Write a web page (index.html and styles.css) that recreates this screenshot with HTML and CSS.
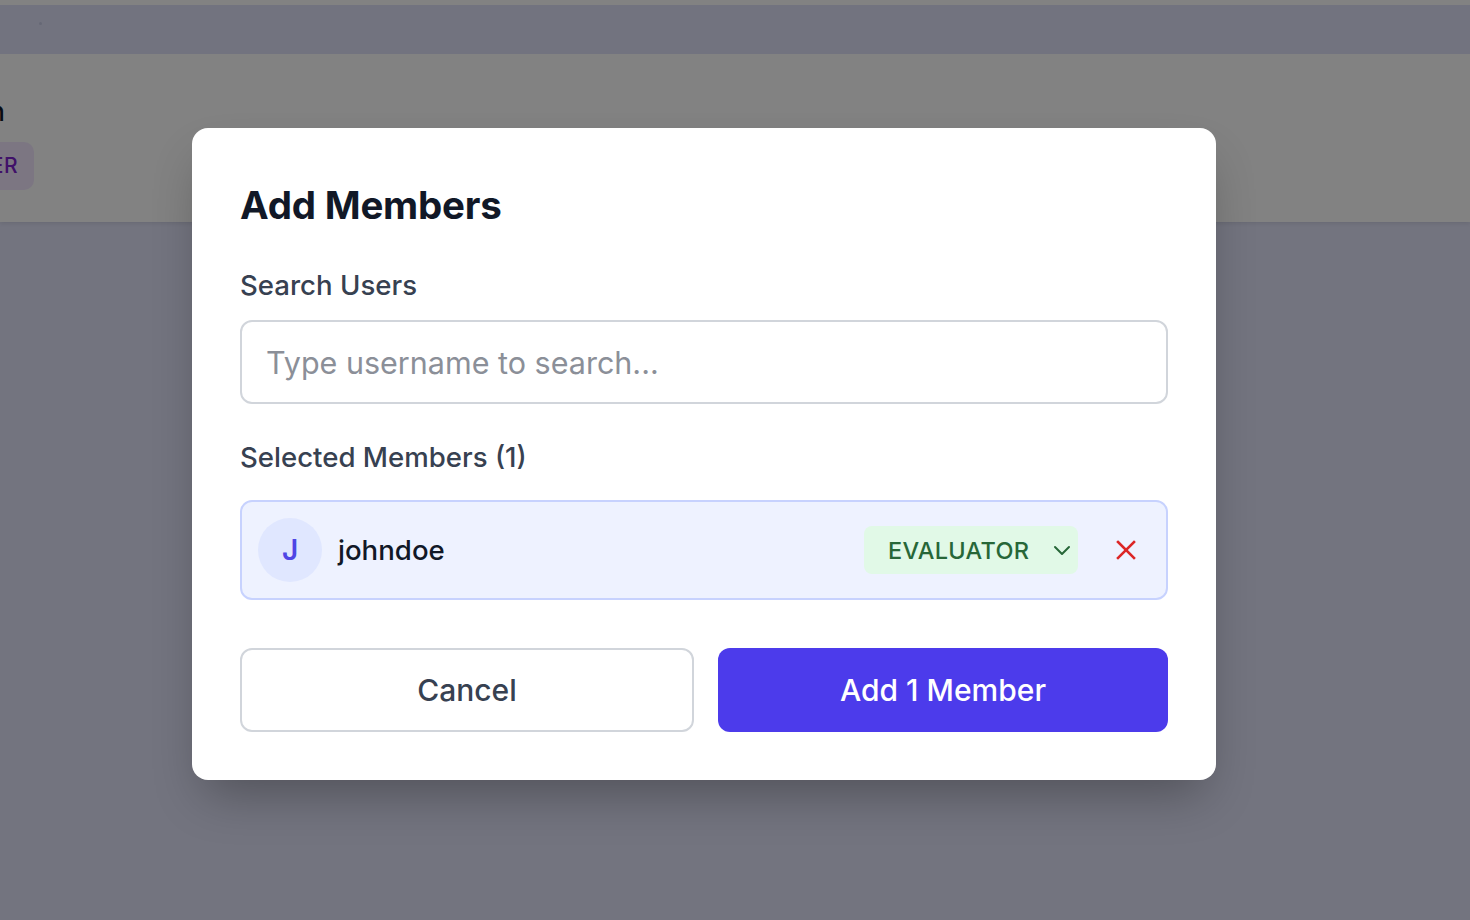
FILE: index.html
```html
<!DOCTYPE html>
<html lang="en">
<head>
<meta charset="utf-8">
<title>Add Members</title>
<link rel="stylesheet" href="styles.css">
</head>
<body>
<div class="page">
  <div class="topbar"></div>
  <div class="header"><span class="dot"></span></div>
  <div class="card">
    <div class="card-name">Admin</div>
    <div class="card-badge-wrap"><span class="card-badge">OWNER</span></div>
  </div>
</div>
<div class="overlay"></div>
<div class="modal" role="dialog" aria-labelledby="modal-title">
  <h2 class="modal-title" id="modal-title">Add Members</h2>
  <label class="field-label" for="search">Search Users</label>
  <input class="search-input" id="search" type="text" placeholder="Type username to search...">
  <div class="field-label selected-label">Selected Members (1)</div>
  <div class="member-row">
    <div class="avatar">J</div>
    <div class="member-name">johndoe</div>
    <div class="role-select">
      <span class="role-text">EVALUATOR</span>
      <svg class="chevron" width="18" height="18" viewBox="0 0 18 18" fill="none" stroke="currentColor" stroke-width="2" stroke-linecap="round" stroke-linejoin="round"><polyline points="2,6 9,13 16,6"/></svg>
    </div>
    <button class="remove-btn" aria-label="Remove">
      <svg width="22" height="22" viewBox="0 0 22 22" fill="none" stroke="currentColor" stroke-width="2.6" stroke-linecap="square"><line x1="3" y1="3" x2="19" y2="19"/><line x1="19" y1="3" x2="3" y2="19"/></svg>
    </button>
  </div>
  <div class="actions">
    <button class="btn btn-cancel">Cancel</button>
    <button class="btn btn-primary">Add 1 Member</button>
  </div>
</div>
</body>
</html>
```
FILE: styles.css
```css
* { box-sizing: border-box; }
html, body { margin: 0; padding: 0; }
body {
  width: 1470px;
  height: 920px;
  overflow: hidden;
  font-family: Inter, "Noto Sans", "Liberation Sans", sans-serif;
  background: #e1e3f9;
  position: relative;
}
.page { display: flex; flex-direction: column; }
.topbar { height: 5px; background: #ffffff; }
.header { height: 49px; background: #dfe2fa; position: relative; }
.dot { position: absolute; left: 39px; top: 17px; width: 3px; height: 3px; border-radius: 50%; background: #c9cce6; }
.card {
  height: 168px;
  background: #ffffff;
  box-shadow: 0 2px 4px rgba(0,0,0,0.08);
  display: flex;
  flex-direction: column;
  padding-top: 40px;
}
.card-name {
  width: 200px;
  margin-left: -195px;
  text-align: right;
  font-size: 26px;
  font-weight: 500;
  color: #111827;
  line-height: 36px;
}
.card-badge-wrap {
  width: 34px;
  display: flex;
  justify-content: flex-end;
  margin-top: 12px;
}
.card-badge {
  flex: none;
  height: 48px;
  padding: 0 16px 0 16px;
  border-radius: 10px;
  background: #f3e8ff;
  color: #7e22ce;
  font-size: 21px;
  font-weight: 500;
  line-height: 48px;
  letter-spacing: 0.5px;
}
.overlay {
  position: absolute;
  inset: 0;
  background: rgba(0,0,0,0.49);
}
.modal {
  position: absolute;
  left: 192px;
  top: 128px;
  width: 1024px;
  height: 652px;
  background: #ffffff;
  border-radius: 16px;
  padding: 54px 48px 48px;
  display: flex;
  flex-direction: column;
  box-shadow: 0 25px 50px -12px rgba(0,0,0,0.3);
}
.modal-title {
  margin: 0;
  font-size: 38.5px;
  line-height: 46px;
  font-weight: 700;
  color: #111827;
  letter-spacing: -0.2px;
}
.field-label {
  display: block;
  margin-top: 39px;
  font-size: 27.6px;
  line-height: 36px;
  font-weight: 500;
  color: #374151;
}
.search-input {
  margin-top: 17px;
  height: 84px;
  width: 100%;
  border: 2px solid #d1d5db;
  border-radius: 12px;
  padding: 0 24px;
  font-family: inherit;
  font-size: 30.5px;
  color: #111827;
  outline: none;
}
.search-input::placeholder { color: #8b8f98; }
.selected-label { margin-top: 35px; }
.member-row {
  margin-top: 25px;
  height: 100px;
  border: 2px solid #c7d2fe;
  background: #eef2ff;
  border-radius: 12px;
  padding: 0 16px;
  display: flex;
  align-items: center;
}
.avatar {
  width: 64px;
  height: 64px;
  border-radius: 50%;
  background: #e0e7ff;
  color: #4f46e5;
  font-size: 28px;
  font-weight: 600;
  display: flex;
  align-items: center;
  justify-content: center;
  flex: none;
}
.member-name {
  margin-left: 16px;
  font-size: 27.6px;
  font-weight: 500;
  color: #111827;
  flex: 1;
}
.role-select {
  height: 48px;
  width: 214px;
  border-radius: 8px;
  background: #e1f9e7;
  color: #276738;
  display: flex;
  align-items: center;
  padding: 0 7px 0 24px;
}
.role-text {
  font-size: 23.5px;
  font-weight: 500;
  letter-spacing: 0.3px;
  flex: 1;
}
.chevron { flex: none; }
.remove-btn {
  margin-left: 37px;
  margin-right: 13px;
  width: 22px;
  height: 22px;
  padding: 0;
  border: none;
  background: transparent;
  color: #dc2626;
  display: flex;
  align-items: center;
  justify-content: center;
}
.actions {
  margin-top: 48px;
  display: flex;
  gap: 24px;
}
.btn {
  flex: 1;
  height: 84px;
  border-radius: 12px;
  font-family: inherit;
  font-size: 30px;
  font-weight: 500;
}
.btn-cancel {
  background: #ffffff;
  border: 2px solid #d1d5db;
  color: #374151;
}
.btn-primary {
  background: #4c3beb;
  border: none;
  color: #ffffff;
}
```
